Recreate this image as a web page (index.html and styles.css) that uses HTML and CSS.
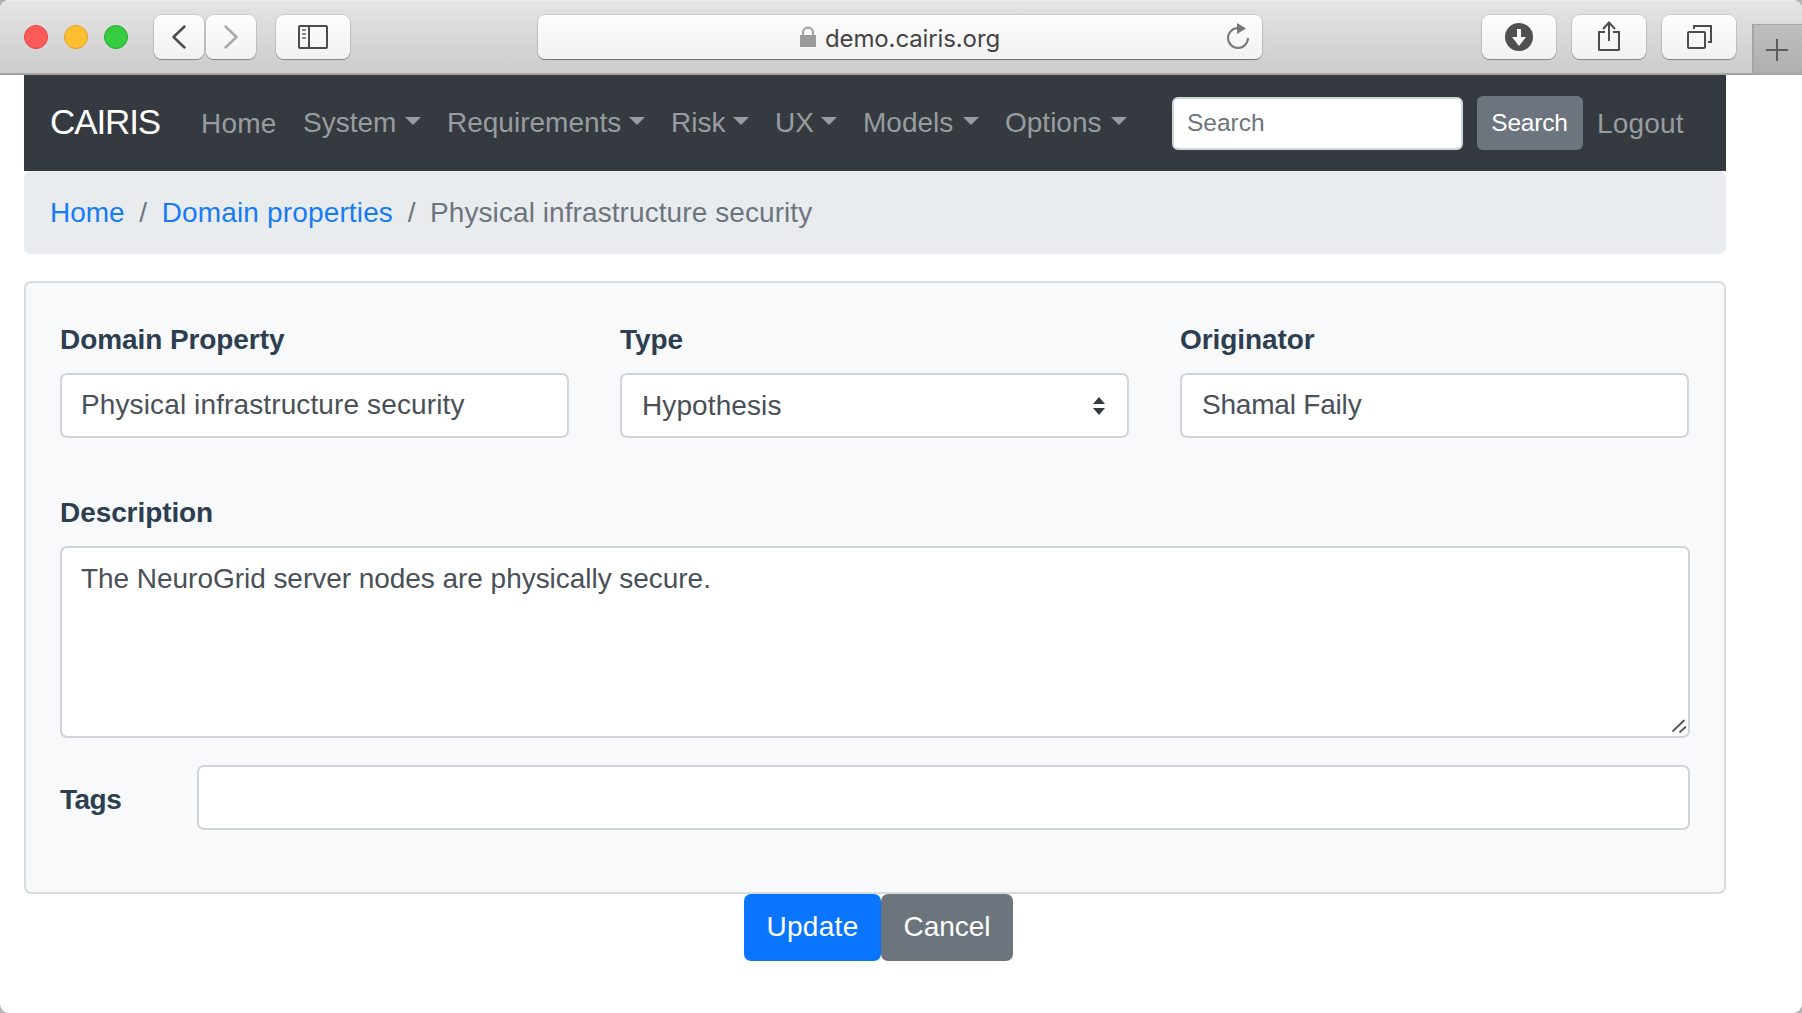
FILE: index.html
```html
<!DOCTYPE html>
<html lang="en">
<head>
<meta charset="utf-8">
<title>CAIRIS</title>
<link rel="stylesheet" href="styles.css">
</head>
<body>
<div class="window">
  <header class="toolbar">
    <div class="lights"><span class="light red"></span><span class="light amber"></span><span class="light green"></span></div>
    <div class="history">
      <button class="tool nav-tool" aria-label="Back"><svg width="50" height="44" viewBox="0 0 50 44"><path d="M30.500 11.500L19.500 22L30.500 32.500" fill="none" stroke="#4c4c4c" stroke-width="2.500" stroke-linecap="round" stroke-linejoin="round"/></svg></button>
      <button class="tool nav-tool" aria-label="Forward"><svg width="50" height="44" viewBox="0 0 50 44"><path d="M19.500 11.500L30.500 22L19.500 32.500" fill="none" stroke="#aaa" stroke-width="2.500" stroke-linecap="round" stroke-linejoin="round"/></svg></button>
    </div>
    <button class="tool sidebar-tool" aria-label="Sidebar"><svg width="74" height="44" viewBox="0 0 74 44" fill="none" stroke="#4c4c4c" stroke-width="2"><rect x="23" y="11" width="28" height="22" rx="1"/><path d="M33 11V33"/><path d="M26 15H30M26 19H30M26 23H30" stroke="#888"/></svg></button>
    <div class="address">
      <svg class="lock" width="18" height="22" viewBox="0 0 18 22"><path d="M4 10V6.500a5 5 0 0 1 10 0V10" fill="none" stroke="#9b9b9b" stroke-width="2"/><rect x="1" y="9" width="16" height="12" fill="#9b9b9b"/></svg>
      <span class="host">demo.cairis.org</span>
      <svg class="reload" width="26" height="28" viewBox="0 0 26 28"><path d="M13 5A10 10 0 1 0 23 15" fill="none" stroke="#777" stroke-width="2"/><path d="M12 0L21 5.500L12 11Z" fill="#777"/></svg>
    </div>
    <div class="actions">
      <button class="tool" aria-label="Downloads"><svg width="74" height="44" viewBox="0 0 74 44"><circle cx="37" cy="22" r="14" fill="#505050"/><path d="M35 14h4v8h5l-7 9l-7-9h5Z" fill="#fff"/></svg></button>
      <button class="tool" aria-label="Share"><svg width="74" height="44" viewBox="0 0 74 44" fill="none" stroke="#4c4c4c" stroke-width="2"><path d="M33 17H27V34.500q0 .5.5.5H46.500q.5 0 .5-.5V17H41"/><path d="M37 26V8M31 14L37 7.500L43 14"/></svg></button>
      <button class="tool" aria-label="Tabs"><svg width="74" height="44" viewBox="0 0 74 44" fill="none" stroke="#4c4c4c" stroke-width="2"><rect x="26" y="17" width="17" height="16" rx="1"/><path d="M32 14V11H49V27H46"/></svg></button>
    </div>
    <button class="new-tab" aria-label="New tab"><svg width="48" height="48" viewBox="0 0 48 48"><path d="M12 25H34M23 14V36" stroke="#5c5c5c" stroke-width="2"/></svg></button>
  </header>

  <main class="page">
    <nav class="navbar">
      <a class="brand">CAIRIS</a>
      <a class="link home">Home</a>
      <div class="menus">
        <a class="link menu"><span>System</span><i class="caret"></i></a>
        <a class="link menu"><span>Requirements</span><i class="caret"></i></a>
        <a class="link menu"><span>Risk</span><i class="caret"></i></a>
        <a class="link menu"><span>UX</span><i class="caret"></i></a>
        <a class="link menu"><span>Models</span><i class="caret"></i></a>
        <a class="link menu"><span>Options</span><i class="caret"></i></a>
      </div>
      <input class="search-input" type="text" placeholder="Search">
      <button class="search-button">Search</button>
      <a class="link logout">Logout</a>
    </nav>

    <div class="breadcrumb">
      <a class="crumb">Home</a><span class="slash">/</span><a class="crumb domain">Domain properties</a><span class="slash">/</span><span class="current">Physical infrastructure security</span>
    </div>

    <form class="card">
      <div class="columns">
        <div><label class="label" for="name">Domain Property</label><input class="control name" id="name" type="text" value="Physical infrastructure security"></div>
        <div><label class="label" for="type">Type</label>
          <div class="select-wrap"><select class="control select" id="type"><option>Hypothesis</option></select><svg class="arrows" width="14" height="20" viewBox="0 0 14 20"><path d="M1 8L7 1L13 8ZM1 12H13L7 19Z" fill="#343a40"/></svg></div>
        </div>
        <div><label class="label" for="originator">Originator</label><input class="control originator" id="originator" type="text" value="Shamal Faily"></div>
      </div>
      <div class="description">
        <label class="label" for="description">Description</label>
        <div class="area-wrap"><textarea class="control area" id="description">The NeuroGrid server nodes are physically secure.</textarea><svg class="grip" width="16" height="16" viewBox="0 0 16 16"><path d="M2 13L13 2.500M9 14L14.500 9" stroke="#555" stroke-width="1.800" stroke-linecap="round"/></svg></div>
      </div>
      <div class="tags"><label class="tags-label" for="tags">Tags</label><input class="control" id="tags" type="text"></div>
    </form>
    <div class="buttons"><button class="button update">Update</button><button class="button cancel">Cancel</button></div>
  </main>
</div>
</body>
</html>
```
FILE: styles.css
```css
* { box-sizing: border-box; }
body { margin: 0; background: #b4b4b4; font-family: "Liberation Sans", Arial, sans-serif; font-size: 28px; line-height: 42px; }
button, input, select, textarea { font-family: inherit; margin: 0; }
svg { display: block; }
.window { height: 1013px; overflow: hidden; background: #fff; border-radius: 9px; }

.toolbar { display: flex; align-items: flex-start; height: 75px; padding: 15px 0 0 24px; background: linear-gradient(#f0f0f0 0, #e4e4e4 2px, #cccccc 73px); border-bottom: 2px solid #a5a5a7; }
.lights { display: flex; gap: 16px; margin-top: 10px; }
.light { width: 24px; height: 24px; border-radius: 50%; border: 1px solid; }
.red { background: #ff5b5b; border-color: #e2453f; }
.amber { background: #fdbf30; border-color: #dfa023; }
.green { background: #35cc42; border-color: #24aa30; }
.tool { flex: none; width: 74px; height: 44px; padding: 0; border: 0; border-radius: 8px; background: linear-gradient(#fdfdfd, #f2f2f2); box-shadow: 0 0 0 1px rgba(0,0,0,.09), 0 1px 1px rgba(0,0,0,.32); }
.history { display: flex; gap: 2px; margin-left: 26px; }
.nav-tool { width: 50px; }
.sidebar-tool { margin-left: 20px; }
.address { display: flex; flex: none; width: 724px; height: 44px; margin-left: 188px; padding-left: 261px; border-radius: 7px; background: linear-gradient(#fdfdfd, #f2f2f2); box-shadow: 0 0 0 1px rgba(0,0,0,.09), 0 1px 1px rgba(0,0,0,.4); }
.lock { margin-top: 11px; }
.host { width: 176px; margin-left: 8px; font-family: Inter, sans-serif; font-size: 24px; line-height: 48px; letter-spacing: -.12px; color: #444; white-space: nowrap; }
.reload { margin: 8px 0 0 224px; }
.actions { display: flex; gap: 16px; margin-left: 220px; }
.new-tab { flex: none; width: 50px; height: 49px; margin: 9px 0 0 16px; padding: 0; border: 0; border-left: 2px solid #a5a5a5; border-top: 1px solid #a5a5a5; background: linear-gradient(#bebebe, #afafaf); }

.page { width: 1702px; margin-left: 24px; }
.navbar { display: flex; align-items: center; height: 96px; padding-left: 26px; background: #343a40; }
.brand { width: 151px; margin-top: -2px; font-size: 35px; letter-spacing: -1.1px; color: #fff; }
.link { color: #999c9f; }
.home { width: 102px; margin-top: 1px; letter-spacing: .2px; }
.menus { display: grid; grid-template-columns: 118px 198px 78px 62px 116px 122px; column-gap: 26px; width: 869px; margin-top: -1px; }
.menu { display: flex; align-items: center; justify-content: space-between; }
.caret { border: 8px solid transparent; border-top-color: currentColor; border-bottom: 0; margin-top: -3px; }
.search-input { width: 291px; height: 53px; margin-top: 1px; padding: 0 13px 1px; border: 2px solid #ced4da; border-radius: 6px; font-size: 24.500px; background: #fff; }
.search-input::placeholder { color: #6c757d; opacity: 1; }
.search-button { width: 106px; height: 54px; margin-left: 14px; padding: 0 1px 0 0; border: 0; border-radius: 6px; background: #6c757d; color: #fff; font-size: 24.500px; letter-spacing: -.2px; }
.logout { margin: 1px 0 0 14px; letter-spacing: .2px; }

.breadcrumb { display: flex; align-items: center; height: 83px; padding-left: 26px; border-radius: 7px; background: #e9ecef; color: #6c757d; }
.crumb { color: #177bf5; }
.domain { letter-spacing: .15px; }
.slash { width: 37px; text-align: center; }
.current { letter-spacing: .08px; }

.card { height: 613px; margin-top: 27px; padding: 36px 34px 0; border: 2px solid #d9dbdd; border-radius: 7px; background: #f8f9fb; }
.columns { display: grid; grid-template-columns: repeat(3, 509px); column-gap: 51px; }
.label { display: block; margin-bottom: 12px; }
.label, .tags-label { font-weight: bold; letter-spacing: -.08px; color: #2c3e50; }
.control { display: block; width: 100%; height: 65px; padding: 0 19px 2px; border: 2px solid #ced4da; border-radius: 7px; background: #fff; color: #495057; font-size: 28px; }
.name { letter-spacing: .12px; }
.originator { padding-left: 20px; letter-spacing: -.2px; }
.select-wrap, .area-wrap { position: relative; }
.select { appearance: none; padding: 0 20px; letter-spacing: .1px; }
.arrows { position: absolute; right: 23px; top: 23px; }
.description { margin-top: 54px; }
.area { height: 192px; padding-top: 10px; line-height: 42px; letter-spacing: -.04px; resize: none; overflow: hidden; }
.grip { position: absolute; right: 3px; bottom: 4px; }
.tags { display: grid; grid-template-columns: 137px 1fr; align-items: center; margin-top: 27px; }
.tags-label { margin-top: 5px; letter-spacing: -.5px; }
.buttons { display: flex; padding-left: 720px; }
.button { width: 137px; height: 67px; padding: 0 0 1px; border: 0; border-radius: 7px; color: #fff; font-size: 28px; }
.update { background: #0a75ff; letter-spacing: .3px; }
.cancel { width: 132px; background: #6c757d; }
```
